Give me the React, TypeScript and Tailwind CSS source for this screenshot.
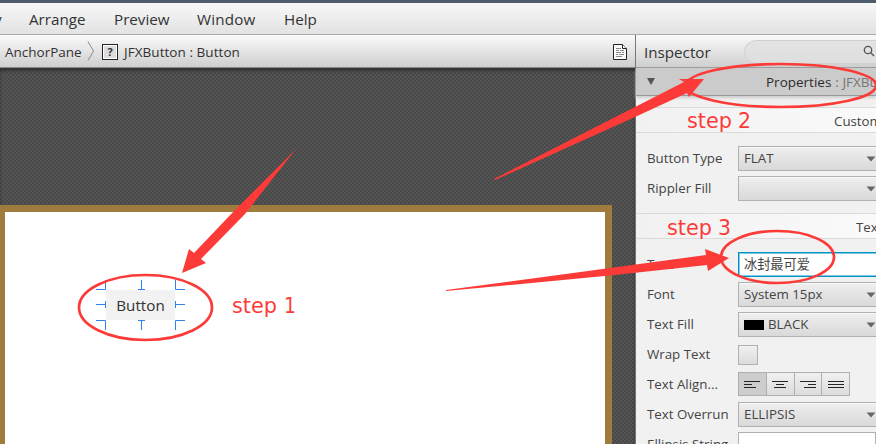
import React from "react";

const ui = "font-['Open_Sans','Noto_Sans_CJK_SC',sans-serif]";

function Row({ label, children }: { label: string; children: React.ReactNode }) {
  return (
    <div className="flex h-[30px] shrink-0 items-center pl-[11px]">
      <span className="w-[91px] shrink-0 pt-[2px] text-[13.3px] whitespace-nowrap text-[#444]">{label}</span>
      {children}
    </div>
  );
}

function Select({ children }: { children?: React.ReactNode }) {
  return (
    <div className="flex h-[25px] w-[160px] shrink-0 items-center border border-[#b0b0b0] bg-linear-to-b from-[#efefef] to-[#d9d9d9] pl-[5px] text-[13.3px] text-[#444] shadow-[inset_0_1px_0_#f8f8f8]">
      <div className="flex w-[122px] items-center gap-1 pt-[2px] whitespace-nowrap">{children}</div>
      <svg width="10" height="6" viewBox="0 0 10 6" className="mt-[2px] shrink-0">
        <path d="M0.5 0.5H9.5L5 5.5Z" fill="#666" />
      </svg>
    </div>
  );
}

function Section({ title, pad }: { title: string; pad: string }) {
  return (
    <div className={"flex h-[26px] shrink-0 items-center border-y border-[#dadada] bg-linear-to-r from-[#f1f1f1] to-[#fafafa] pt-[3px] text-[13.3px] whitespace-nowrap text-[#444] " + pad}>
      {title}
    </div>
  );
}

const aligns = [
  ["M0 .5H16M0 3.5H8M0 6.5H12", "bg-[#cdcdcd]"],
  ["M0 .5H16M4 3.5H12M2 6.5H14", "bg-linear-to-b from-[#f0f0f0] to-[#dcdcdc]"],
  ["M0 .5H16M8 3.5H16M4 6.5H16", "bg-linear-to-b from-[#f0f0f0] to-[#dcdcdc]"],
  ["M0 .5H16M0 3.5H16M0 6.5H16", "bg-linear-to-b from-[#f0f0f0] to-[#dcdcdc]"],
];

function Inspector() {
  return (
    <div className="flex w-[241px] shrink-0 flex-col border-l border-[#777] bg-[#f1f1f1]">
      <div className="flex h-[33px] shrink-0 items-center border-b border-[#999] bg-linear-to-b from-[#fafafa] to-[#cfcfcf] pl-[8px]">
        <span className="w-[100px] shrink-0 pt-[2px] text-[15.2px] text-[#333]">Inspector</span>
        <div className="mt-[1px] flex h-[24px] w-[160px] shrink-0 items-center rounded-full border border-[#d0d0d0] bg-linear-to-b from-[#e4e4e4] to-[#dedede] pl-[118px]">
          <svg width="12" height="12" viewBox="0 0 12 12" fill="none" stroke="#555" strokeWidth="1.3" className="-mt-[2px]">
            <circle cx="5" cy="5" r="3.7" />
            <path d="M7.8 7.8L11 11" />
          </svg>
        </div>
      </div>
      <div className="flex h-[28px] shrink-0 items-center border-b border-[#999] bg-[#cbcbcb] pl-[11px] text-[13.5px] whitespace-nowrap shadow-[0_2px_3px_#ccc]">
        <svg width="8" height="8" viewBox="0 0 8 8" className="-mt-px mr-[111px] shrink-0">
          <path d="M0 1H8L4 8Z" fill="#555" />
        </svg>
        <span className="pt-[2px] text-[#2b2b2b]">Properties</span>
        <span className="ml-[4px] pt-[2px] text-[#777]">: JFXButton</span>
      </div>
      <div className="h-[11px] shrink-0" />
      <Section title="Custom" pad="pl-[198px]" />
      <div className="h-[10px] shrink-0" />
      <Row label="Button Type"><Select>FLAT</Select></Row>
      <Row label="Rippler Fill"><Select /></Row>
      <div className="h-[10px] shrink-0" />
      <Section title="Text" pad="pl-[220px]" />
      <div className="h-[10px] shrink-0" />
      <Row label="Text">
        <div className="flex h-[25px] w-[160px] shrink-0 items-center border border-[#0093c4] bg-white pl-[5px] font-['Noto_Sans_CJK_SC',sans-serif] text-[13.2px] text-[#444] shadow-[inset_0_0_0_1px_#7cc9e4]">冰封最可爱</div>
      </Row>
      <Row label="Font"><Select>System 15px</Select></Row>
      <Row label="Text Fill">
        <Select><span className="-mt-px h-[10px] w-[20px] bg-black" />BLACK</Select>
      </Row>
      <Row label="Wrap Text"><div className="mt-[2px] size-[20px] border border-[#b0b0b0] bg-linear-to-b from-[#f0f0f0] to-[#dcdcdc]" /></Row>
      <Row label="Text Align...">
        <div className="flex h-[24px] w-[112px] border border-[#b0b0b0]">
          {aligns.map(([d, bg], i) => (
            <div key={d} className={"flex flex-1 items-center justify-center " + bg + (i ? " border-l border-[#b0b0b0]" : "")}>
              <svg width="16" height="7" viewBox="0 0 16 7" stroke="#222"><path d={d} /></svg>
            </div>
          ))}
        </div>
      </Row>
      <Row label="Text Overrun"><Select>ELLIPSIS</Select></Row>
      <Row label="Ellipsis String"><div className="h-[25px] w-[160px] border border-[#b0b0b0] bg-white" /></Row>
    </div>
  );
}

export default function App() {
  return (
    <div className={"relative flex h-[444px] w-[876px] flex-col overflow-hidden " + ui}>
      <div className="h-[3px] shrink-0 bg-[#4f5c6c]" />
      <div className="flex h-[32px] shrink-0 items-center border-b border-[#aaa] bg-linear-to-b from-[#f8f8f8] to-[#e2e2e2] pt-[2px] text-[15.2px] text-[#333]">
        <span className="-ml-[6px] w-[35px]">y</span>
        <span className="w-[85px]">Arrange</span>
        <span className="w-[83px]">Preview</span>
        <span className="w-[87px] tracking-[0.2px]">Window</span>
        <span>Help</span>
      </div>
      <div className="flex h-[409px]">
        <div className="flex w-[635px] shrink-0 flex-col">
          <div className="flex h-[33px] shrink-0 items-center border-b border-[#888] bg-linear-to-b from-[#fafafa] to-[#cfcfcf] pl-[5px] text-[13.5px] whitespace-nowrap text-[#333]">
            <span className="w-[82px] pt-[3px]">AnchorPane</span>
            <svg width="8" height="20" viewBox="0 0 8 20" fill="none" stroke="#888"><path d="M1 .5L6.5 10L1 19.5" /></svg>
            <span className="mt-[2px] mr-[6px] ml-[7px] flex size-[16px] items-center justify-center border border-[#222] bg-[#ddd] text-[11px] font-bold shadow-[inset_0_0_0_1px_white]">?</span>
            <span className="pt-[3px] tracking-[0.05px]">JFXButton : Button</span>
            <svg width="14" height="16" viewBox="0 0 14 16" className="mt-[2px] mr-[8px] ml-auto" fill="#fafafa" stroke="#222">
              <path d="M.5 .5H9.5L13.5 4.5V15.5H.5Z" /><path d="M9.5 .5V4.5H13.5" />
              <path d="M3 4.500H8M3 6.500H6M7 6.500H11M3 8.500H8M9 8.500H11M3 10.500H5M6 10.500H11M3 12.500H9" stroke="#888" />
            </svg>
          </div>
          <div className="flex-1 bg-[#4f4f4f] bg-[repeating-conic-gradient(#484848_0_25%,#555_0_50%)] bg-[length:4px_4px] pt-[137px] shadow-[inset_0_3px_3px_#333]">
            <div className="h-[240px] w-[612px] border-t-[7px] border-r-[7px] border-l-[5px] border-[#9f7c3d] bg-white pt-[78px] pl-[101px]">
              <div className="flex h-[30px] w-[69px] items-center justify-center bg-[#f2f2f2] text-[15.2px] text-[#333]">Button</div>
            </div>
          </div>
        </div>
        <Inspector />
      </div>
      <svg className="absolute inset-0" width="876" height="444" viewBox="0 0 876 444" fill="none">
        <path d="M96 289.5H105.5V280M141.5 280V289.5M138 289.5H145M175.5 280V289.5H185M96 304.5H105.5M105.5 301V308M175.5 301V308M175.5 304.5H185M96 320.5H105.5V330M138 320.5H145M141.5 320.5V330M175.5 330V320.5H185" stroke="#2b84ee" />
        <g stroke="#fc3b38" strokeWidth="2.7">
          <ellipse cx="145.500" cy="307.500" rx="66.500" ry="32.500" />
          <ellipse cx="781" cy="85.500" rx="95" ry="21.500" />
          <ellipse cx="777.500" cy="257" rx="56.500" ry="26" />
        </g>
        <g fill="#fc3b38">
          <path d="M296 149L245 214L201 259L206 263L182 273L189 249L194 253L235 210Z" />
          <path d="M494 179L635 107L684 82L679 79L704 79L689 97L687 93L635 117L495 180Z" />
          <path d="M446 290L610 268L706 255L705 249L729 258L708 271L707 265L610 275.500L446 291Z" />
          <g className="font-['DejaVu_Sans',sans-serif] text-[22px]">
            <text x="232" y="312.500" textLength="45" lengthAdjust="spacingAndGlyphs">step</text>
            <text x="284" y="312.500" textLength="12" lengthAdjust="spacingAndGlyphs">1</text>
            <text x="687" y="128" textLength="45" lengthAdjust="spacingAndGlyphs">step</text>
            <text x="738" y="128" textLength="13" lengthAdjust="spacingAndGlyphs">2</text>
            <text x="667" y="235" textLength="45" lengthAdjust="spacingAndGlyphs">step</text>
            <text x="718" y="235" textLength="13" lengthAdjust="spacingAndGlyphs">3</text>
          </g>
        </g>
      </svg>
    </div>
  );
}
